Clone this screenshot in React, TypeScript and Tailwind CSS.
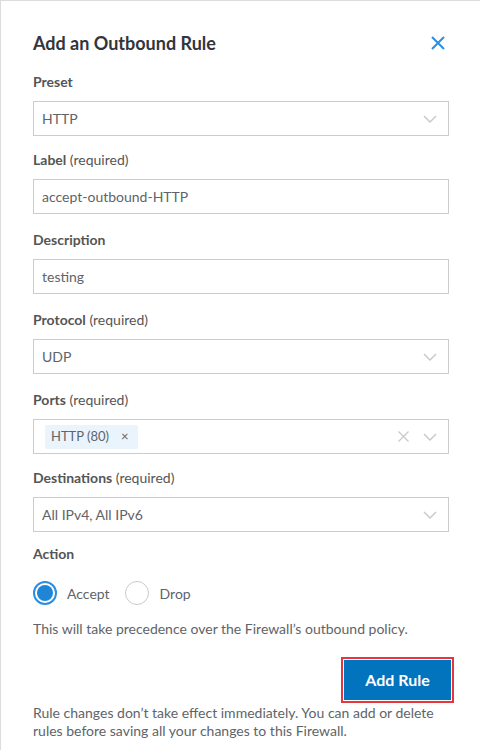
import React from "react";

const Chevron = () => (
  <svg width="14" height="8" viewBox="0 0 14 8" fill="none">
    <path d="M1 1 L7 7 L13 1" stroke="#c9cacb" strokeWidth="1.5" />
  </svg>
);

const Label = ({ name, req }: { name: string; req?: boolean }) => (
  <div className="h-[18px] leading-[18px] text-[14px] text-[#555555] mb-[10px]">
    <span className="font-bold">{name}</span>
    {req && <span className="font-normal"> (required)</span>}
  </div>
);

const Select = ({ value }: { value: string }) => (
  <div className="h-[35px] border border-[#cccccc] flex items-center justify-between pl-[8px] pr-[11px] text-[14px] text-[#606469]">
    <span>{value}</span>
    <Chevron />
  </div>
);

const Input = ({ value }: { value: string }) => (
  <div className="h-[35px] border border-[#cccccc] flex items-center pl-[8px] text-[14px] text-[#606469]">
    {value}
  </div>
);

export default function App() {
  return (
    <div
      className="w-[480px] h-[750px] bg-white border-t border-l border-[#dcdcdc] overflow-hidden"
      style={{ fontFamily: "Lato, 'Noto Sans', sans-serif" }}
    >
      <div className="pl-[32px] pr-[31px]">
        <div className="flex items-center justify-between pt-[30px] h-[56px]">
          <h2 className="text-[18px] font-bold text-[#32363c] leading-[24px] mt-[-2px]">Add an Outbound Rule</h2>
          <svg width="14" height="14" viewBox="0 0 14 14" className="mr-[4px] mt-[-2px]">
            <path d="M1 1 L13 13 M13 1 L1 13" stroke="#2b8ee0" strokeWidth="2" />
          </svg>
        </div>

        <div className="mt-[16px]">
          <Label name="Preset" />
          <Select value="HTTP" />
        </div>
        <div className="mt-[15px]">
          <Label name="Label" req />
          <Input value="accept-outbound-HTTP" />
        </div>
        <div className="mt-[17px]">
          <Label name="Description" />
          <Input value="testing" />
        </div>
        <div className="mt-[17px]">
          <Label name="Protocol" req />
          <Select value="UDP" />
        </div>
        <div className="mt-[17px]">
          <Label name="Ports" req />
          <div className="h-[35px] border border-[#cccccc] flex items-center justify-between pl-[11px] pr-[11px] text-[#606469]">
            <div className="h-[24px] bg-[#e9f4fd] rounded-[2px] flex items-center pl-[6px] pr-[9px] text-[13px]">
              <span>HTTP (80)</span>
              <span className="ml-[12px] text-[13px]">×</span>
            </div>
            <div className="flex items-center gap-[14px]">
              <svg width="11" height="11" viewBox="0 0 11 11">
                <path d="M0.5 0.5 L10.5 10.5 M10.5 0.5 L0.5 10.5" stroke="#c9cacb" strokeWidth="1.3" />
              </svg>
              <Chevron />
            </div>
          </div>
        </div>
        <div className="mt-[15px]">
          <Label name="Destinations" req />
          <Select value="All IPv4, All IPv6" />
        </div>

        <div className="mt-[13px] text-[14px] font-bold text-[#555555] h-[18px] leading-[18px]">Action</div>

        <div className="flex items-center mt-[18px] h-[24px] text-[14px] text-[#606469]">
          <div className="w-[24px] h-[24px] rounded-full border-[2px] border-[#2b8ee0] flex items-center justify-center">
            <div className="w-[16px] h-[16px] rounded-full bg-[#1f86d6]" />
          </div>
          <span className="ml-[10px]">Accept</span>
          <div className="ml-[15px] w-[24px] h-[24px] rounded-full border border-[#c9cacb]" />
          <span className="ml-[11px]">Drop</span>
        </div>

        <div className="mt-[15px] text-[14px] text-[#606469] leading-[18px]">
          This will take precedence over the Firewall’s outbound policy.
        </div>

        <div className="flex justify-end mt-[19px] mr-[-5px]">
          <div className="border-[2px] border-[#e5353f] p-[1px]">
            <button className="w-[107px] h-[40px] bg-[#0274bd] text-white font-bold text-[16px]">Add Rule</button>
          </div>
        </div>

        <div className="mt-[1px] text-[14px] text-[#606469] leading-[18px]">
          Rule changes don’t take effect immediately. You can add or delete rules before saving all your changes to this Firewall.
        </div>
      </div>
    </div>
  );
}
